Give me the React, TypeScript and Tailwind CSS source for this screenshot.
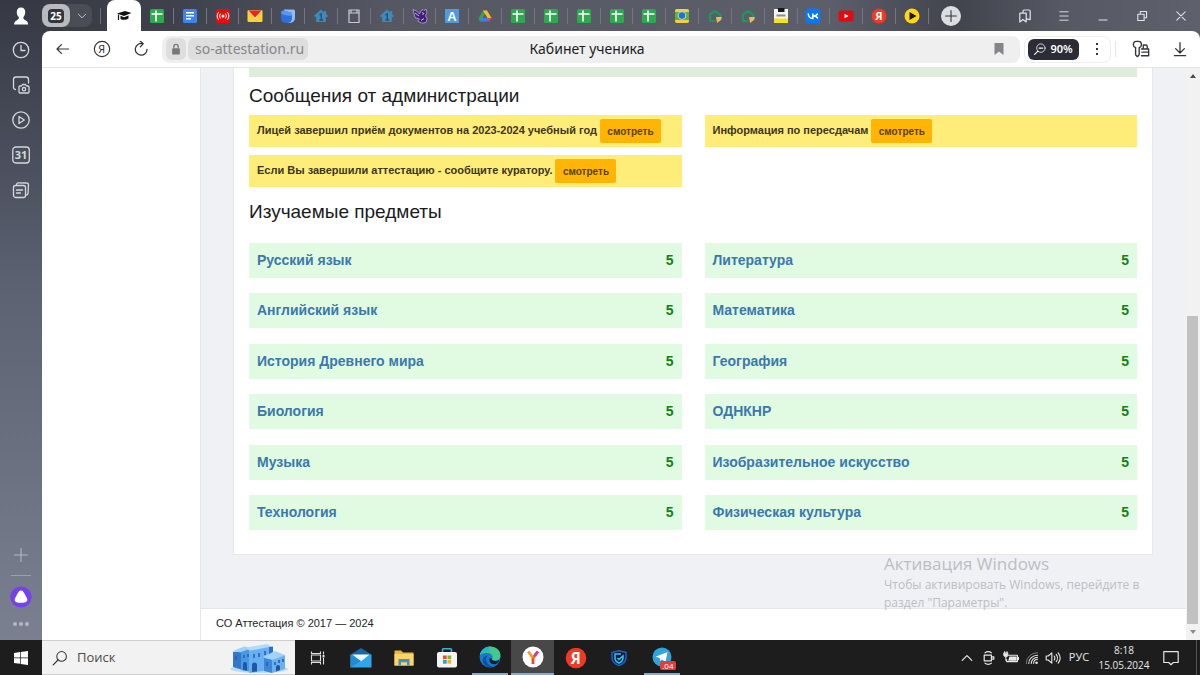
import React from 'react';

const alerts = [
  { id: 1, text: 'Лицей завершил приём документов на 2023-2024 учебный год' },
  { id: 2, text: 'Информация по пересдачам' },
  { id: 3, text: 'Если Вы завершили аттестацию - сообщите куратору.' },
];

const subjects = [
  { name: 'Русский язык', grade: 5 },
  { name: 'Литература', grade: 5 },
  { name: 'Английский язык', grade: 5 },
  { name: 'Математика', grade: 5 },
  { name: 'История Древнего мира', grade: 5 },
  { name: 'География', grade: 5 },
  { name: 'Биология', grade: 5 },
  { name: 'ОДНКНР', grade: 5 },
  { name: 'Музыка', grade: 5 },
  { name: 'Изобразительное искусство', grade: 5 },
  { name: 'Технология', grade: 5 },
  { name: 'Физическая культура', grade: 5 },
];

type IconProps = { className?: string; children: React.ReactNode };

function Line({ className = 'h-5 w-5', children }: IconProps) {
  return (
    <svg viewBox="0 0 20 20" className={className} fill="none" stroke="currentColor" strokeWidth="1.3" strokeLinecap="round" strokeLinejoin="round" aria-hidden="true">
      {children}
    </svg>
  );
}

function Fav({ className = 'h-4 w-4', children }: IconProps) {
  return (
    <svg viewBox="0 0 16 16" className={className} aria-hidden="true">
      {children}
    </svg>
  );
}

const Sheets = () => (
  <Fav>
    <rect x="1" y="1" width="14" height="14" rx="1.5" fill="#2fa84f" />
    <path d="M2.5 6h11M7 2.500v11" stroke="#fff" strokeWidth="1.6" />
  </Fav>
);

const Docs = () => (
  <Fav>
    <rect x="1" y="1" width="14" height="14" rx="1.5" fill="#3f83f0" />
    <path d="M4 4.8h8M4 7.8h8M4 10.8h5" stroke="#fff" strokeWidth="1.6" />
  </Fav>
);

const Broadcast = () => (
  <Fav>
    <rect x="1" y="1" width="14" height="14" rx="2" fill="#e80c0c" />
    <circle cx="8" cy="8" r="1.5" fill="#fff" />
    <path d="M5.6 5.6a3.4 3.4 0 0 0 0 4.8M10.4 5.6a3.4 3.4 0 0 1 0 4.8M3.6 4.2a5.6 5.6 0 0 0 0 7.6M12.4 4.2a5.6 5.6 0 0 1 0 7.6" fill="none" stroke="#fff" strokeWidth="1" />
  </Fav>
);

const YandexMail = () => (
  <Fav>
    <rect x=".5" y="2.5" width="15" height="11.5" rx="1" fill="#ffcf33" />
    <path d="M.5 2.500l7.500 9 7.500-9z" fill="#ffe28a" />
    <path d="M1.500 2.5h13L8 9.500z" fill="#ee2222" />
  </Fav>
);

const BlueCube = () => (
  <Fav>
    <path d="M4 1.500h9.500a1.500 1.500 0 0 1 1.500 1.500v7a5 5 0 0 1-5 5H6z" fill="#8fbcf5" />
    <path d="M1 5c0-1.500 1-2.500 2.500-2.500L12 5v5.500A4.500 4.500 0 0 1 7.500 15H6a5 5 0 0 1-5-5z" fill="#2f6fdc" />
    <path d="M1 5c0-1.500 1-2.500 2.500-2.500L12 5v2.500C8 8 4 7.500 1 5z" fill="#5d95ee" />
  </Fav>
);

const HouseOne = () => (
  <Fav>
    <path d="M8 1.500L.8 8l1.500 1.200.9-.7V14h9.600V8.500l.9.700L15.200 8l-2-1.800V3h-2v1.400z" fill="#4189b8" />
    <path d="M6.500 7L8.200 5.800V12M6.300 12h3.800" fill="none" stroke="#234f70" strokeWidth="1.300" />
  </Fav>
);

const PageOutline = () => (
  <Fav>
    <path d="M3 2h10v12.500H3zM3 5h10M5 2.500V5M11 2.500V5" fill="none" stroke="#c9cad0" strokeWidth="1.200" />
  </Fav>
);

const Owl = () => (
  <Fav>
    <path d="M1 1.500l4 1.800L7.500 6 9 3l2-1.500 1 1L14 1l.8 3.500L13.500 8l1.500 2.500-1 4-4 .7L5.500 13l2-2L3 9.500z" fill="#3d2078" stroke="#b9a4d8" strokeWidth=".8" />
    <path d="M3 5l4 3M10 4.500l2 1-1.500 1.500M9 12.500l3-2" fill="none" stroke="#d7caea" strokeWidth=".9" />
  </Fav>
);

const LetterA = () => (
  <Fav>
    <rect x="1" y="1" width="14" height="14" fill="#4f9bdc" />
    <text x="8" y="13" textAnchor="middle" fontSize="13" fontWeight="700" fill="#fff" fontFamily="Liberation Sans, sans-serif">A</text>
  </Fav>
);

const Drive = () => (
  <Fav>
    <path d="M6 2.500h3.800L5 11.500 3 14 1.500 10.500z" fill="#3f9c55" />
    <path d="M6 2.500h4L14.500 10H10.500z" fill="#f9bb2d" />
    <path d="M5 10h9.500l-2 3.500H3z" fill="#3e7ee8" />
    <path d="M10.500 10h4l-2 3.500z" fill="#e4472f" />
    <path d="M8 6.500L10 10H6z" fill="#5a5d69" />
  </Fav>
);

const Classroom = () => (
  <Fav>
    <rect x="1" y="1" width="14" height="14" rx="2" fill="#5fae4a" />
    <path d="M1 3a2 2 0 0 1 2-2h10a2 2 0 0 1 2 2v1H1z" fill="#f3cd4b" />
    <path d="M1 12h14v1a2 2 0 0 1-2 2H3a2 2 0 0 1-2-2z" fill="#f3cd4b" />
    <circle cx="8" cy="7.500" r="4.300" fill="#b5dca8" />
    <circle cx="8" cy="7.500" r="3.200" fill="#1f6fe0" />
  </Fav>
);

const GreenHouse = () => (
  <Fav>
    <path d="M8 13H3V6.500L8 2.800l5.300 4V9" fill="none" stroke="#24935c" strokeWidth="2.200" strokeLinejoin="round" />
    <path d="M9 9h6l-1 3-4 3z" fill="#e9bb62" />
  </Fav>
);

const Floppy = () => (
  <Fav>
    <rect x="1" y="1" width="14" height="14" fill="#f4f4f4" />
    <rect x="1" y="10.500" width="14" height="4.500" fill="#f2e21d" />
    <path d="M5 0h6.500v4H5z" fill="#17181c" />
    <path d="M3.500 7.500h9" stroke="#8d8d8d" strokeWidth="2" />
  </Fav>
);

const Vk = () => (
  <Fav>
    <rect x=".5" y=".5" width="15" height="15" rx="4" fill="#0a78f5" />
    <path d="M3.200 5.500c.3 3.300 2 5 4.600 5V5.500M12.600 5.500c-.5 1.500-2 2.400-4.600 2.400 2.600 0 4.200 1 4.800 2.600" fill="none" stroke="#fff" strokeWidth="1.500" />
  </Fav>
);

const YouTube = () => (
  <Fav>
    <rect x=".5" y="2.500" width="15" height="11" rx="3" fill="#e30b12" />
    <path d="M6.500 5.700v4.600l4-2.300z" fill="#fff" />
  </Fav>
);

const YandexRed = ({ className }: { className?: string }) => (
  <Fav className={className}>
    <circle cx="8" cy="8" r="7.500" fill="#f03a24" />
    <text x="7.800" y="12" textAnchor="middle" fontSize="11" fontWeight="700" fill="#fff" fontFamily="Open Sans, sans-serif">Я</text>
  </Fav>
);

const PlayYellow = () => (
  <Fav>
    <circle cx="8" cy="8" r="7.500" fill="#ffd519" />
    <path d="M5.500 4v8l7-4z" fill="#1b1b1b" />
  </Fav>
);

const tabs = [
  { title: 'Таблица', Icon: Sheets },
  { title: 'Документ', Icon: Docs },
  { title: 'Трансляция', Icon: Broadcast },
  { title: 'Почта', Icon: YandexMail },
  { title: 'Сервис', Icon: BlueCube },
  { title: 'Школа', Icon: HouseOne },
  { title: 'Страница', Icon: PageOutline },
  { title: 'Школа', Icon: HouseOne },
  { title: 'Сова', Icon: Owl },
  { title: 'Словарь', Icon: LetterA },
  { title: 'Диск', Icon: Drive },
  { title: 'Таблица', Icon: Sheets },
  { title: 'Таблица', Icon: Sheets },
  { title: 'Таблица', Icon: Sheets },
  { title: 'Таблица', Icon: Sheets },
  { title: 'Таблица', Icon: Sheets },
  { title: 'Класс', Icon: Classroom },
  { title: 'Дом', Icon: GreenHouse },
  { title: 'Дом', Icon: GreenHouse },
  { title: 'Файл', Icon: Floppy },
  { title: 'ВКонтакте', Icon: Vk },
  { title: 'YouTube', Icon: YouTube },
  { title: 'Яндекс', Icon: YandexRed },
  { title: 'Музыка', Icon: PlayYellow },
];

function SideRail() {
  return (
    <aside className="flex w-[42px] shrink-0 flex-col items-center bg-linear-to-b from-[#363944] via-[#5c6272] via-45% to-[#7b8090] text-[#d5d7dd]">
      <button aria-label="Профиль" className="flex h-8 items-center">
        <svg viewBox="0 0 20 20" className="h-5 w-5" fill="#fff" aria-hidden="true">
          <path d="M10 1.500c3 0 4.400 2 4.200 5-.1 2.200-1 3.700-1.800 4.600-.2 1.600.2 2.200 1.600 2.900 1.800.8 2.900 1.800 3.200 4.500H3c.3-2.700 1.600-3.700 3.300-4.500 1.400-.7 1.700-1.500 1.500-2.900C6.700 10.200 5.900 8.700 5.800 6.500c-.2-3 1.200-5 4.200-5z" />
        </svg>
      </button>
      <nav className="flex flex-col items-center gap-[15px] pt-2">
        <button aria-label="История">
          <Line>
            <circle cx="10" cy="10" r="7.700" />
            <path d="M10 5.500V10.500h4" />
          </Line>
        </button>
        <button aria-label="Скриншот">
          <Line>
            <path d="M4.500 14.500A2 2 0 0 1 2.500 12.500V4.500a2.500 2.500 0 0 1 2.500-2.500h10a2.500 2.500 0 0 1 2.500 2.500V8" />
            <path d="M8 12a1 1 0 0 1 1-1h1.500l1-1.500h3l1 1.500h1.500a1 1 0 0 1 1 1v5a1 1 0 0 1-1 1H9a1 1 0 0 1-1-1z" />
            <circle cx="13" cy="14.200" r="1.700" />
          </Line>
        </button>
        <button aria-label="Видео">
          <Line>
            <circle cx="10" cy="10" r="8.200" />
            <path d="M8 6.500v7l5.300-3.500z" />
          </Line>
        </button>
        <button aria-label="Календарь">
          <Line>
            <rect x="1.800" y="2" width="16.500" height="16" rx="3" />
            <text x="10" y="14" textAnchor="middle" fontSize="11" fontWeight="700" fill="currentColor" stroke="none" fontFamily="Open Sans, sans-serif">31</text>
          </Line>
        </button>
        <button aria-label="Заметки">
          <Line>
            <rect x="2.500" y="5.500" width="12" height="12" rx="2" />
            <path d="M5.500 5.300V4.500a2 2 0 0 1 2-1.700l8 .2a2 2 0 0 1 2 2l-.5 8.500a2 2 0 0 1-2 1.500M5.500 10h6M5.500 13h4" />
          </Line>
        </button>
      </nav>
      <div className="mt-auto flex flex-col items-center text-[#b4b8c2]">
        <button aria-label="Добавить" className="mb-3">
          <Line className="h-4 w-4">
            <path d="M10 2v16M2 10h16" />
          </Line>
        </button>
        <span className="mb-2.5 h-px w-5 bg-[#9ba0ac]" />
        <button aria-label="Алиса" className="mb-3.5">
          <svg viewBox="0 0 22 22" className="h-[22px] w-[22px]" aria-hidden="true">
            <circle cx="11" cy="11" r="10.600" fill="#7440f0" />
            <path d="M11 4.500c1.600 0 2.400 1 3.700 3.500 1.500 2.800 2.600 4.600 2.600 6 0 2.200-2.700 2.800-6.300 2.800S4.700 16.200 4.700 14c0-1.400 1.100-3.200 2.600-6C8.600 5.500 9.400 4.500 11 4.500z" fill="#fff" />
          </svg>
        </button>
        <button aria-label="Ещё" className="mb-3.5 flex gap-[2px]">
          <i className="h-1 w-1 rounded-full bg-current" />
          <i className="h-1 w-1 rounded-full bg-current" />
          <i className="h-1 w-1 rounded-full bg-current" />
        </button>
      </div>
    </aside>
  );
}

function TabStrip() {
  return (
    <div className="flex h-[31px] items-stretch bg-[linear-gradient(90deg,#383a45_0%,#3f414c_12%,#555763_30%,#5c5e69_68%,#41434d_79%,#565863_88%,#5e606b_100%)] text-[#e3e4e8]">
      <div className="mr-2 flex items-center">
        <div className="flex h-[23px] items-center rounded-lg bg-[#4a4c56] pr-1">
          <button className="flex h-[23px] w-7 items-center justify-center rounded-lg bg-[#b9babf]">
            <span className="rounded bg-[#33353d] px-[2px] text-[10px] leading-[14px] font-bold text-white">25</span>
          </button>
          <button aria-label="Список групп" className="ml-1.5">
            <Line className="h-3 w-3">
              <path d="M4 7l6 6 6-6" />
            </Line>
          </button>
        </div>
      </div>
      <span className="mr-[6px] h-4 w-px self-center bg-[#6a6c76]" />
      <button aria-label="Кабинет ученика" className="flex w-[34px] shrink-0 items-center justify-center rounded-t-lg bg-white">
        <svg viewBox="0 0 16 16" className="h-4 w-4" aria-hidden="true">
          <path d="M1 5.500L9 3l6.500 2-7.500 3z" fill="#111" />
          <path d="M4.500 7.800l3.500 1.400 4.500-1.700v3c-2 1.600-6 1.800-8 .4z" fill="#111" />
          <path d="M2.500 6.500v5.500" stroke="#111" strokeWidth="1.200" />
        </svg>
      </button>
      <div className="flex min-w-0 flex-1">
        {tabs.map(({ title, Icon }, i) => (
          <button key={i} aria-label={title} className="flex min-w-0 flex-1 items-center">
            <span className="flex flex-1 items-center justify-center">
              <Icon />
            </span>
            <span className="h-4 w-px bg-[#747681]" />
          </button>
        ))}
      </div>
      <button aria-label="Новая вкладка" className="mr-8 flex w-11 shrink-0 items-center justify-center">
        <span className="flex h-5 w-5 items-center justify-center rounded-full bg-[#dcdde0] text-[#33353d]">
          <Line className="h-3 w-3">
            <path d="M10 1v18M1 10h18" strokeWidth="1.800" />
          </Line>
        </span>
      </button>
      <div className="flex shrink-0">
        <button aria-label="Закладки" className="flex w-[39px] items-center justify-center">
          <Line className="h-4 w-4">
            <path d="M3.500 6.500h8v11l-4-3-4 3zM7.500 6V4a1.500 1.500 0 0 1 1.500-1.500h6A1.500 1.500 0 0 1 16.500 4v10.500l-4.500-1" strokeWidth="1.500" />
          </Line>
        </button>
        <button aria-label="Меню" className="flex w-[39px] items-center justify-center">
          <Line className="h-3.5 w-3.5">
            <path d="M4 4h12M4 10h12M4 16h12" />
          </Line>
        </button>
        <button aria-label="Свернуть" className="flex w-[39px] items-center justify-center">
          <Line className="h-4 w-4">
            <path d="M5 15h10" strokeWidth="1.500" />
          </Line>
        </button>
        <button aria-label="Восстановить" className="flex w-[39px] items-center justify-center">
          <Line className="h-3.5 w-3.5">
            <path d="M4 7.500h9v9H4zM7.500 7V3.500h9v9H13" strokeWidth="1.600" />
          </Line>
        </button>
        <button aria-label="Закрыть" className="flex w-[39px] items-center justify-center">
          <Line className="h-3.5 w-3.5">
            <path d="M4 4l12 12M16 4L4 16" strokeWidth="1.500" />
          </Line>
        </button>
      </div>
    </div>
  );
}

function Toolbar() {
  return (
    <div className="bg-linear-to-r from-[#3a3c47] to-[#5b5d68]">
      <div className="flex h-[37px] items-center rounded-t-lg border-b border-[#e3e5e3] bg-white pr-1 text-[#33343a]">
        <button aria-label="Назад" className="flex w-[42px] items-center justify-center">
          <Line className="h-4 w-4">
            <path d="M8 4.500L2.500 10 8 15.500M3 10h14" strokeWidth="1.500" />
          </Line>
        </button>
        <button aria-label="Яндекс" className="flex w-9 items-center justify-center">
          <Line className="h-[18px] w-[18px]">
            <circle cx="10" cy="10" r="8.500" />
            <text x="9.700" y="14.300" textAnchor="middle" fontSize="12" fill="currentColor" stroke="none" fontFamily="Noto Sans, sans-serif">Я</text>
          </Line>
        </button>
        <button aria-label="Обновить" className="flex w-[42px] items-center justify-center">
          <Line className="h-4 w-4">
            <path d="M17.500 10.500a7.300 7.300 0 1 1-5-7M8.800 0l4 3.300-3.600 4" strokeWidth="1.600" />
          </Line>
        </button>
        <div className="grid h-[27px] min-w-0 flex-1 grid-cols-[1fr_auto_1fr] items-center rounded-lg bg-[#efefef] pr-3 pl-1">
          <div className="flex items-center gap-0.5">
            <span className="flex h-[22px] w-5 items-center justify-center rounded-md bg-[#dedede] text-[#77787c]">
              <svg viewBox="0 0 12 14" className="h-3 w-3" aria-hidden="true">
                <rect x="1.500" y="6" width="9" height="7.500" rx="1" fill="currentColor" />
                <path d="M3.500 6V4a2.500 2.500 0 0 1 5 0v2" fill="none" stroke="currentColor" strokeWidth="1.500" />
              </svg>
            </span>
            <a href="#" className="flex h-[22px] w-[120px] items-center rounded-md bg-[#dedede] pl-[7px] text-[14px] leading-5 text-[#85868a]">so-attestation.ru</a>
          </div>
          <span className="text-[14px] leading-5 text-[#1c1c1f]">Кабинет ученика</span>
          <button aria-label="В закладки" className="justify-self-end pr-1">
            <svg viewBox="0 0 10 12" className="h-3 w-2.5" fill="#858589" aria-hidden="true">
              <path d="M.5 0h9v12L5 8.500.5 12z" />
            </svg>
          </button>
        </div>
        <div className="ml-1 flex h-[27px] w-[87px] items-center rounded-lg border border-[#eeeeee] pl-[3px]">
          <button className="flex h-[21px] w-[51px] items-center justify-center gap-1 rounded-md bg-[#2b2c35] text-[11px] font-semibold text-white">
            <Line className="h-3 w-3">
              <circle cx="11.500" cy="8.500" r="7" />
              <path d="M6.500 13.500L1 19M8.500 8.500h6" strokeWidth="1.800" />
            </Line>
            90%
          </button>
          <button aria-label="Ещё" className="flex flex-1 flex-col items-center gap-[3px] pl-1">
            <i className="h-[2px] w-[2px] bg-current" />
            <i className="h-[2px] w-[2px] bg-current" />
            <i className="h-[2px] w-[2px] bg-current" />
          </button>
        </div>
        <span className="ml-1 h-4 w-px bg-[#e6e6e6]" />
        <button aria-label="Пароли" className="ml-[15px] flex w-5 items-center justify-center">
          <Line className="h-[18px] w-[18px]">
            <path d="M4 8.500v8l2 2 2-2V8.500c1.700-.7 2.500-1.800 2.500-3.300C10.500 3 9.300 1.500 7.500 1.500h-3C2.700 1.500 1.500 3 1.500 5.200 1.500 6.700 2.300 7.800 4 8.500z" strokeWidth="1.500" />
            <path d="M10.500 10h8v7.500h-8M12.500 10V5.500h2.500a2 2 0 0 1 2 2V10M11 13.500h7" strokeWidth="1.500" />
          </Line>
        </button>
        <button aria-label="Загрузки" className="mr-1.5 ml-[19px] flex w-5 items-center justify-center">
          <Line className="h-4 w-4">
            <path d="M10 2v12.500M4.500 9.500L10 15l5.500-5.500M3 18.300h14" strokeWidth="1.600" />
          </Line>
        </button>
      </div>
    </div>
  );
}

function PageContent() {
  return (
    <div className="flex flex-1 bg-white font-['Liberation_Sans',Arial,sans-serif]">
      <div className="w-[159px] shrink-0 border-r border-[#e6e7ea]" />
      <div className="relative flex min-w-0 flex-1 flex-col bg-[#f0f1f5]">
        <main className="mr-[33px] mb-[53px] ml-8 flex flex-1 flex-col border border-t-0 border-[#e6e8ec] bg-white px-[15px] pb-6">
          <div className="h-[9px] bg-[#dfeeda]" />
          <h2 className="pt-[7px] text-[19px] leading-6 text-[#1b1b1b]">Сообщения от администрации</h2>
          <div className="mt-[7px] grid grid-cols-1 gap-x-[23px] gap-y-2 md:grid-cols-2">
            {alerts.map((alert) => (
              <div key={alert.id} className="flex min-h-8 items-center gap-[3px] bg-[#ffed7a] px-2 text-[11px] font-bold text-[#3b3620]">
                <span className="pb-0.5">{alert.text}</span>
                <button className="h-6 w-[61px] shrink-0 rounded-[2px] bg-[#ffb406] text-[10px] font-bold text-[#5a4310]">смотреть</button>
              </div>
            ))}
          </div>
          <h2 className="mt-[13px] text-[19px] leading-6 text-[#1b1b1b]">Изучаемые предметы</h2>
          <div className="mt-[19px] grid flex-1 grid-cols-1 content-between gap-x-[23px] md:grid-cols-2">
            {subjects.map((subject) => (
              <div key={subject.name} className="flex h-[35px] items-center justify-between bg-[#e0fbe1] px-2 text-[14px] font-bold">
                <a href="#" className="text-[#3b78ad]">{subject.name}</a>
                <span className="text-[#168016]">{subject.grade}</span>
              </div>
            ))}
          </div>
        </main>
        <footer className="h-8 border-t border-[#e3e5e9] bg-white pl-[15px] text-[11px] leading-7 text-[#242424]">СО Аттестация © 2017 — 2024</footer>
        <div className="pointer-events-none absolute right-[34px] bottom-[28px] w-[268px] font-['Open_Sans',sans-serif] text-[#bcbec2]">
          <p className="text-[17px] leading-6">Активация Windows</p>
          <p className="text-[12px] leading-[18px]">Чтобы активировать Windows, перейдите в раздел "Параметры".</p>
        </div>
      </div>
      <div className="flex w-[14px] shrink-0 flex-col items-center bg-[#f2f2f2]">
        <svg viewBox="0 0 8 8" className="my-1 h-2 w-2" fill="#4d4d4d" aria-hidden="true">
          <path d="M1 6l3-4 3 4z" />
        </svg>
        <div className="flex w-full flex-1 flex-col justify-end pr-0.5 pl-px">
          <div className="h-[57%] bg-[#c1c1c1]" />
        </div>
        <svg viewBox="0 0 8 8" className="my-1 h-2 w-2" fill="#8c8c8c" aria-hidden="true">
          <path d="M1 2l3 4 3-4z" />
        </svg>
      </div>
    </div>
  );
}

const HousesArt = () => (
  <svg viewBox="0 0 60 32" className="h-8 w-[60px]" aria-hidden="true">
    <ellipse cx="30" cy="27" rx="29" ry="4" fill="#b9dbf4" />
    <path d="M4 10l10-1v19L4 25z" fill="#3178c8" />
    <path d="M3 9.500L15 4.500l8 1-9 5z" fill="#9fd2f7" />
    <path d="M12 10l11-4v24l-11-2z" fill="#4a97e2" />
    <path d="M17 5.500L38 2l5 3-22 4z" fill="#b0dbf9" />
    <path d="M20 9l20-4v23l-20 3z" fill="#69b0f0" />
    <path d="M40 5l4-.5V22l-4 4z" fill="#2c70c0" />
    <path d="M35 16l8 2v13l-8-2z" fill="#3b88d8" />
    <path d="M34 15l12-6 10 4-13 5z" fill="#a2d3f7" />
    <path d="M43 18l13-5v14l-13 4z" fill="#6bb1ef" />
    <path d="M23 30v-7a2.500 2.500 0 0 1 5 0v6.500zM47 29.500V25a2 2 0 0 1 4 0v3zM14 28v-6a2 2 0 0 1 4 0v6.700z" fill="#1f57a8" />
    <path d="M7 14v4M15 13v3M19 12v3M25 12v4M30 11v4M36 9v4M38 20v4M46 20v3M50 18v3M54 17v3" stroke="#2561b4" strokeWidth="1.600" />
  </svg>
);

const Taskbar = () => (
  <footer className="flex h-[35px] shrink-0 items-stretch bg-[#1d1d1d] font-['Open_Sans',sans-serif] text-[#e8e8e8]">
    <button aria-label="Пуск" className="flex w-[42px] items-center justify-center">
      <svg viewBox="0 0 16 16" className="h-4 w-4" fill="#fff" aria-hidden="true">
        <path d="M1 3l6-.9v5.500H1zM7.700 2L15 1v6.600H7.700zM1 8.300h6v5.500L1 13zM7.700 8.300H15V15l-7.300-1z" />
      </svg>
    </button>
    <label className="flex w-[253px] items-center border-y border-[#cfcfcf] bg-[#f2f2f2] pr-1.5 pl-[10px] text-[#333]">
      <Line className="h-4 w-4">
        <circle cx="12" cy="8" r="6" />
        <path d="M7.500 12.500L1.500 18.500" strokeWidth="1.500" />
      </Line>
      <input type="text" placeholder="Поиск" className="ml-[9px] w-0 min-w-0 flex-1 bg-transparent text-[13px] outline-none placeholder:text-[#4b4b4b]" />
      <HousesArt />
    </label>
    <div className="flex pl-px">
      <button aria-label="Представление задач" className="flex w-[43px] items-center justify-center">
        <svg viewBox="0 0 16 16" className="h-4 w-4" fill="none" stroke="#e0e0e0" strokeWidth="1.100" aria-hidden="true">
          <path d="M1.500 1.500v2h9v-2M1.500 5h9v6h-9zM1.500 14.500v-2h9v2M13.500 1.500v3M13.500 8v6.500" />
          <path d="M12.500 5h2v2.500h-2z" fill="#e0e0e0" stroke="none" />
        </svg>
      </button>
      <button aria-label="Почта" className="flex w-[43px] items-center justify-center">
        <svg viewBox="0 0 22 22" className="h-[22px] w-[22px]" aria-hidden="true">
          <path d="M.500 7.500L11 1l10.500 6.500z" fill="#1467ab" />
          <rect x=".5" y="7.500" width="21" height="13" fill="#2fa6ea" />
          <path d="M2.500 7.500h17L11 14.500z" fill="#f1f6fa" />
          <path d="M.5 7.500v13L11 14z" fill="#1f8ad6" />
        </svg>
      </button>
      <button aria-label="Проводник" className="flex w-[43px] items-center justify-center">
        <svg viewBox="0 0 20 20" className="h-5 w-5" aria-hidden="true">
          <path d="M.5 2.500h6.500l2 2h10.500v13H.5z" fill="#e9b83d" />
          <path d="M.5 6h19v11.500H.5z" fill="#fbd667" />
          <path d="M4.500 17.500V11h11v6.500h-2.500v-3.200H7v3.200z" fill="#4190cf" />
        </svg>
      </button>
      <button aria-label="Магазин" className="flex w-[43px] items-center justify-center">
        <svg viewBox="0 0 22 22" className="h-[22px] w-[22px]" aria-hidden="true">
          <path d="M6.500 6V2.800a1 1 0 0 1 1-1h7a1 1 0 0 1 1 1V6" fill="none" stroke="#35b5cf" strokeWidth="1.600" />
          <rect x="1" y="5" width="20" height="15.500" rx="2" fill="#f4f4f4" />
          <path d="M7 8.500h3.700v3.700H7z" fill="#e8502c" />
          <path d="M11.500 8.500h3.700v3.700h-3.700z" fill="#7db72f" />
          <path d="M7 13h3.700v3.700H7z" fill="#2e9be6" />
          <path d="M11.500 13h3.700v3.700h-3.700z" fill="#f5b31b" />
        </svg>
      </button>
      <button aria-label="Edge" className="flex w-[43px] justify-center">
        <span className="flex w-9 items-center justify-center border-b-2 border-[#76aee3]">
          <svg viewBox="0 0 22 22" className="h-[22px] w-[22px]" aria-hidden="true">
            <circle cx="11" cy="11" r="10.500" fill="#1579cf" />
            <path d="M1 9C2 3.500 6.500.5 11.200.5c5.800 0 10.300 4 10.300 8.700 0 3.300-2.500 5.300-5.500 5.300-2.300 0-3.300-.9-3-1.700.7-1 .8-1.800.3-3C11.500 6 5.500 5.500 1 9z" fill="#43c98e" />
            <path d="M1 9C2.500 3.500 7 .5 11.500.6 8 2 10 3.500 12 6.500 8 4.500 4 5.500 1 9z" fill="#25b3d6" />
            <path d="M8.500 9.500C5 13.500 8.500 19.500 14 20.800c-4 1.200-9-.5-10-4.800-.8-4 1.500-6.500 4.500-6.500z" fill="#12509f" />
            <path d="M12.800 12.500c-.7 1.500 1.500 3 4.500 2.500 1.500-.3 2.500-.8 3.200-1.300-.8 3-3 4.500-5.500 4.500-3.500 0-5.500-3.200-4.200-6.200z" fill="#1d1d1d" />
          </svg>
        </span>
      </button>
      <button aria-label="Яндекс Браузер" className="flex w-[43px] items-center justify-center border-b-2 border-[#76aee3] bg-[#484848]">
        <svg viewBox="0 0 22 22" className="h-[22px] w-[22px]" aria-hidden="true">
          <circle cx="11" cy="11" r="10.500" fill="#fff" />
          <path d="M11 18v-6L15.800 5.500" fill="none" stroke="#f0432c" strokeWidth="2.800" />
          <path d="M6.200 5.500L11 12" fill="none" stroke="#f49a1e" strokeWidth="2.800" />
          <path d="M13 9.300l2.800-3.800" stroke="#e3339b" strokeWidth="2.800" />
        </svg>
      </button>
      <button aria-label="Яндекс" className="flex w-[43px] items-center justify-center">
        <YandexRed className="h-[22px] w-[22px]" />
      </button>
      <button aria-label="Защита" className="flex w-[43px] items-center justify-center">
        <svg viewBox="0 0 18 18" className="h-[18px] w-[18px]" fill="none" aria-hidden="true">
          <path d="M2 3.500L9 1.800l7 1.700v5c0 4-2.500 6.500-7 8-4.500-1.500-7-4-7-8z" fill="#0b1d3c" stroke="#1c5fc4" strokeWidth="1.600" />
          <path d="M11 5H5v4c0 2.500 1.500 4 4 5 2.500-1 4-2.500 4-5V7L9 10.500 7.500 9" stroke="#35c3e8" strokeWidth="1.500" />
        </svg>
      </button>
      <button aria-label="Telegram" className="flex w-[43px] justify-center">
        <span className="relative flex w-9 items-center justify-center border-b-2 border-[#76aee3]">
          <svg viewBox="0 0 20 20" className="h-5 w-5" aria-hidden="true">
            <circle cx="10" cy="10" r="9.500" fill="#33a3dc" />
            <path d="M3.500 9.800L15.500 5l-2 10-3.500-2.600L8.300 14l-.5-3z" fill="#fff" />
          </svg>
          <span className="absolute right-1 bottom-[3px] rounded-[2px] bg-[#e53b3b] px-0.5 text-[8px] leading-[9px] text-white">.04</span>
        </span>
      </button>
    </div>
    <div className="ml-auto flex items-center">
      <button aria-label="Скрытые значки" className="flex w-[22px] justify-center">
        <Line className="h-3 w-3">
          <path d="M2 14l8-8 8 8" strokeWidth="2" />
        </Line>
      </button>
      <button aria-label="Камера" className="flex w-[22px] justify-center">
        <Line className="h-4 w-4">
          <path d="M4 6.500h9v7H4zM13 8.500h3v3h-3M5 3.500c2-2 6-2 8 0M5 16.500c2 2 6 2 8 0" strokeWidth="1.500" />
        </Line>
      </button>
      <button aria-label="Батарея" className="flex w-[21px] justify-center">
        <Line className="h-4 w-4">
          <path d="M7 6.500h11v8H4.500V12M19.300 9v3" strokeWidth="1.400" />
          <path d="M8 8h9v5.500H6.500z" fill="currentColor" stroke="none" />
          <path d="M1 4v3c0 2 5 2 5 0V4zM2 2v2M5 2v2M3.500 8v5" fill="currentColor" strokeWidth="1.200" />
        </Line>
      </button>
      <button aria-label="Сеть" className="flex w-[22px] justify-center">
        <Line className="h-4 w-4">
          <path d="M6 17C6 11 10.500 6.500 17 6.500M9 17c0-4.500 3.500-8 8-8M12 17c0-3 2-5.500 5-5.500" strokeWidth="1.300" />
          <path d="M3 17C3 9 9 3.500 17 3.500" strokeWidth="1" opacity=".6" />
          <circle cx="15.700" cy="16" r="1.600" fill="currentColor" stroke="none" />
        </Line>
      </button>
      <button aria-label="Звук" className="flex w-5 justify-center">
        <Line className="h-4 w-4">
          <path d="M1.500 7.500H4L8.500 3.500v13L4 12.500H1.500zM11.500 7.500c1 1.500 1 3.500 0 5M14 5.500c2 2.500 2 6.500 0 9M16.500 3.500c3 4 3 9 0 13" strokeWidth="1.400" />
        </Line>
      </button>
      <button className="w-8 text-center text-[11px]">РУС</button>
      <time className="w-[58px] text-center text-[10px] leading-[15px]">
        8:18
        <br />
        15.05.2024
      </time>
      <button aria-label="Уведомления" className="flex w-[36px] justify-center">
        <Line className="h-[18px] w-[18px]">
          <path d="M2 3h16v12h-5.500L10 17.500 7.500 15H2z" />
        </Line>
      </button>
      <span className="ml-[7px] h-full w-1 border-l border-[#555]" />
    </div>
  </footer>
);

export default function App() {
  return (
    <div className="flex min-h-screen flex-col font-['Noto_Sans',sans-serif]">
      <div className="flex flex-1">
        <SideRail />
        <div className="flex min-w-0 flex-1 flex-col">
          <TabStrip />
          <Toolbar />
          <PageContent />
        </div>
      </div>
      <Taskbar />
    </div>
  );
}
